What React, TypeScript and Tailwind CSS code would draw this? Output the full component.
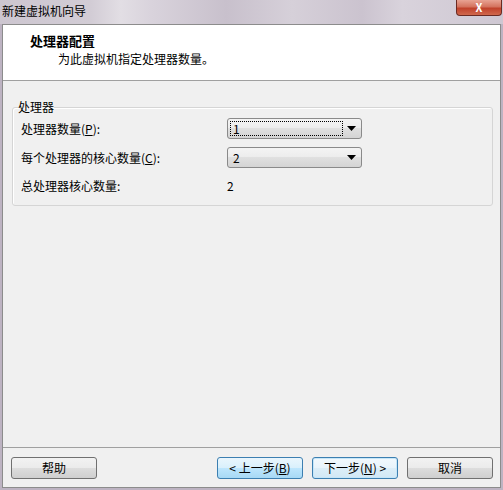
import React from "react";

const font = { fontFamily: '"Noto Sans CJK SC", "Liberation Sans", sans-serif' };

function Arrow() {
  return (
    <svg width="9" height="5" viewBox="0 0 9 5" className="block">
      <path d="M0 0 H9 L4.5 5 Z" fill="#000" />
    </svg>
  );
}

function Combo({ value, focused }: { value: string; focused?: boolean }) {
  return (
    <div className="w-[135px] h-[21px] rounded-[3px] border border-[#8a8a8a] bg-[linear-gradient(#f4f4f4_0%,#ececec_50%,#e0e0e0_50%,#d4d4d4_100%)] flex items-center pl-[2px] pr-[5px]">
      <div
        className={
          "h-[15px] w-[113px] flex items-center pl-[2px] text-[12px] text-black leading-none " +
          (focused ? "border border-dotted border-black" : "border border-transparent")
        }
      >
        {value}
      </div>
      <div className="ml-auto">
        <Arrow />
      </div>
    </div>
  );
}

function Btn({ children, variant }: { children: React.ReactNode; variant?: "hover" | "default" }) {
  const cls =
    variant === "hover"
      ? "border-[#3c7fb1] bg-[linear-gradient(#eaf6fd_0%,#d9f0fc_50%,#bee6fd_50%,#a7d9f5_100%)]"
      : variant === "default"
      ? "border-[#3c7fb1] bg-[linear-gradient(#f2f9fd_0%,#e8f4fb_50%,#dceef8_50%,#d2e8f5_100%)] shadow-[inset_0_0_0_1px_#c6e6f8]"
      : "border-[#707070] bg-[linear-gradient(#f2f2f2_0%,#ebebeb_50%,#dddddd_50%,#cfcfcf_100%)]";
  return (
    <div
      className={
        "w-[86px] h-[22px] rounded-[3px] border flex items-center justify-center text-[12px] text-black leading-none " +
        cls
      }
    >
      {children}
    </div>
  );
}

export default function App() {
  return (
    <div
      style={font}
      className="w-[503px] h-[490px] bg-[#bdb3c2] flex flex-col overflow-hidden"
    >
      {/* title bar */}
      <div className="h-[24px] flex items-start bg-[linear-gradient(90deg,#cdc6d0_0%,#d2ccd5_18%,#e2dee4_24%,#d9d3dc_30%,#c8c0cc_45%,#d6d0d9_58%,#cbc3cf_72%,#d9d3dc_80%,#cec7d2_100%)]">
        <div className="ml-[2px] mt-[4px] text-[12px] leading-[14px] text-black">新建虚拟机向导</div>
        <div className="ml-auto mr-[1px] w-[46px] h-[16px] rounded-b-[4px] border border-t-0 border-[#6b2a22] bg-[linear-gradient(#e8a393_0%,#d4735e_45%,#c0422b_55%,#d0684d_100%)] flex items-center justify-center">
          <span className="text-white font-bold text-[11px] leading-none">X</span>
        </div>
      </div>

      {/* client */}
      <div className="flex-1 ml-[2px] mr-[2px] mb-[2px] border border-[#8c8c8c] flex flex-col bg-[#f0f0f0]">
        {/* header */}
        <div className="h-[56px] bg-white border-b border-[#a0a0a0] pl-[27px] pt-[8px]">
          <div className="text-[13px] font-bold leading-[16px] text-black">处理器配置</div>
          <div className="pl-[28px] mt-[3px] text-[12px] leading-[14px] text-black">为此虚拟机指定处理器数量。</div>
        </div>

        {/* body */}
        <div className="flex-1 pl-[9px] pr-[7px] pt-[19px]">
          <fieldset className="border border-[#d5d5d5] rounded-[3px] pl-[8px] pr-0 pb-[11px] pt-[4px] m-0 shadow-[inset_1px_1px_0_#ffffff]">
            <legend className="text-[12px] leading-[14px] px-0 ml-[-3px] text-black">处理器</legend>
            <div className="flex flex-col">
              <div className="flex items-center h-[21px]">
                <div className="w-[206px] text-[12px] text-black">处理器数量(<span className="underline">P</span>):</div>
                <Combo value="1" focused />
              </div>
              <div className="flex items-center h-[21px] mt-[8px]">
                <div className="w-[206px] text-[12px] text-black">每个处理器的核心数量(<span className="underline">C</span>):</div>
                <Combo value="2" />
              </div>
              <div className="flex items-center h-[16px] mt-[10px]">
                <div className="w-[206px] text-[12px] text-black">总处理器核心数量:</div>
                <div className="text-[12px] text-black">2</div>
              </div>
            </div>
          </fieldset>
        </div>

        {/* footer */}
        <div className="border-t border-[#a0a0a0] pt-[9px] pb-[8px] pl-[8px] pr-[7px] flex items-center">
          <Btn>帮助</Btn>
          <div className="ml-auto flex gap-[9px]">
            <Btn variant="hover">&lt; 上一步(<span className="underline">B</span>)</Btn>
            <Btn variant="default">下一步(<span className="underline">N</span>) &gt;</Btn>
            <Btn>取消</Btn>
          </div>
        </div>
      </div>
    </div>
  );
}
